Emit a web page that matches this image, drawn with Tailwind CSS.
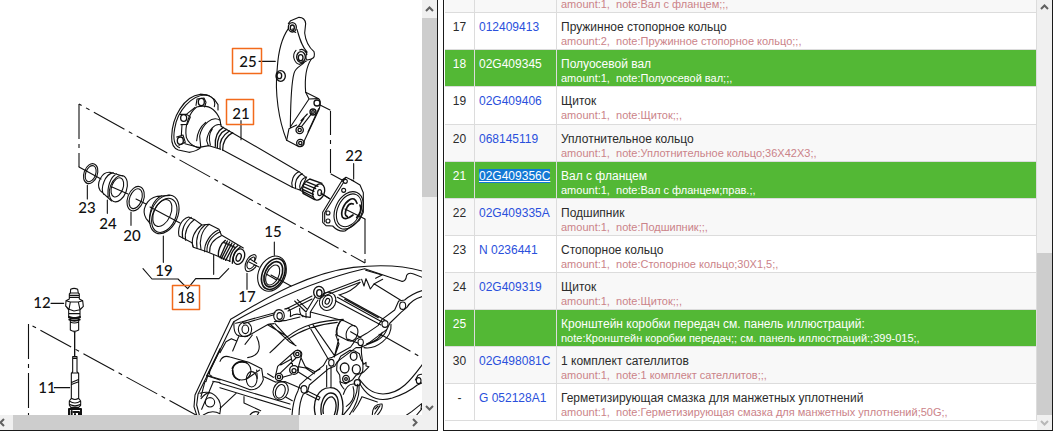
<!DOCTYPE html>
<html lang="ru">
<head>
<meta charset="utf-8">
<title>Каталог запчастей</title>
<script src="https://cdn.jsdelivr.net/npm/@tailwindcss/browser@4"></script>
</head>
<body class="bg-white font-['Liberation_Sans',Arial,sans-serif]">
<main class="flex h-[431px] gap-[5px] pr-px">

<!-- Illustration pane -->
<section class="flex w-[438px] shrink-0 flex-col border-r border-b border-[#1a1a1a]" aria-label="Иллюстрация">
  <div class="flex min-h-0 flex-1">
    <svg class="min-w-0 flex-1" viewBox="0 0 422 415" preserveAspectRatio="xMinYMin slice" fill="none" stroke="#111" stroke-width="1.1" stroke-linecap="round" stroke-linejoin="round">
      <!-- assembly axes -->
      <g stroke-dasharray="35 5 4 5" stroke-linecap="butt">
        <path stroke-dashoffset="32" d="M79 104L365 263"/>
        <path d="M79 104V167"/>
        <path stroke-dashoffset="36" d="M29 324L196 415"/>
        <path d="M28.500 324V415"/>
        <path d="M365 219V263"/>
        <path stroke-dasharray="24 5 4 5" d="M330.500 111V174"/>
        <path d="M380 334L424 359"/>
      </g>
      <path d="M79 167L101 179M112 187L128 194M136 199L146 204M150 207L180 223M249 262L259 267M271 275L291 286M320 105L330 110M331 174L342 180M322 194L330 199M345 209L365 219"/>

      <!-- ring 23, boot 24, ring 20 -->
      <g transform="scale(.33333)" stroke-width="3.3">
        <ellipse cx="272" cy="521" rx="20" ry="31" transform="rotate(20 272 521)"/>
        <ellipse cx="272" cy="521" rx="15" ry="25" transform="rotate(20 272 521)"/>
        <path d="M262 556V597M322 600V640M393 636V676"/>
        <ellipse cx="355" cy="566" rx="25" ry="41" transform="rotate(20 355 566)"/>
        <ellipse cx="352" cy="562" rx="17" ry="30" transform="rotate(20 352 562)"/>
        <path d="M368 528L330 517C305 515 288 550 300 571L335 603M340 518C315 522 300 565 311 583M350 521C332 530 320 560 325 594"/>
        <ellipse cx="407" cy="596" rx="24" ry="38" transform="rotate(20 407 596)"/>
        <ellipse cx="407" cy="596" rx="18" ry="31" transform="rotate(20 407 596)"/>
      </g>

      <!-- boot 19, shaft 18, circlip 17, bearing 15, flange 22 -->
      <g transform="translate(130 180) scale(.33333)" stroke-width="3.3">
        <ellipse cx="103" cy="103" rx="40" ry="61" transform="rotate(24 103 103)"/>
        <ellipse cx="97" cy="99" rx="25" ry="43" transform="rotate(24 97 99)"/>
        <ellipse cx="103" cy="106" rx="34" ry="54" transform="rotate(24 103 106)"/>
        <path d="M120 46L82 49C48 57 34 91 48 115L60 130M94 47Q60 65 58 124"/>
        <path d="M176 111C153 117 142 144 147 168L186 188L190 202L231 215L300 244M176 111L194 119L216 135L237 133L267 148L274 165L340 204"/>
        <path d="M184 112C163 126 153 151 158 174M194 118C173 133 162 157 167 181M215 135C194 151 182 176 189 200M226 134C205 151 197 177 201 204M237 133C214 151 207 183 213 208M265 150C242 160 222 189 224 215M271 155C246 166 229 188 231 215M274 167C249 178 238 197 239 216"/>
        <path stroke-width="4" d="M286 181C272 190 262 214 266 230M292 183L270 233M299 186L274 236M306 189L280 238M313 192L287 241M323 197C309 208 300 225 299 244M331 201C314 212 307 231 307 250M281 187L315 202"/>
        <ellipse cx="327" cy="230" rx="16" ry="24" transform="rotate(20 327 230)" stroke-width="4"/>
        <ellipse cx="326" cy="232" rx="7" ry="12" transform="rotate(20 326 232)" stroke-width="4"/>
        <path d="M373 245C381 232 380 222 370 224C353 228 341 253 347 270C353 281 372 270 379 257M373 245C376 233 373 229 368 232C354 237 347 256 353 264C358 271 368 263 373 255L379 257M360 237L380 250M351 280V328"/>
        <ellipse cx="426" cy="281" rx="40" ry="55" transform="rotate(25 426 281)"/>
        <ellipse cx="430" cy="282" rx="32" ry="49" transform="rotate(25 430 282)" stroke-width="5"/>
        <ellipse cx="430" cy="283" rx="25" ry="40" transform="rotate(25 430 283)" stroke-width="5"/>
        <ellipse cx="428" cy="285" rx="18" ry="32" transform="rotate(25 428 285)"/>
        <path d="M433 186V226M410 283L440 300"/>
        <path d="M100 168V247M251 225V283M39 266L66 297H144L173 326L197 296H267L296 266"/>
        <path d="M637 0L631 10L578 97V127L588 137L608 138Q625 156 645 153L688 121L700 97V38L690 15L665 0M640 8L584 98V126"/>
        <ellipse cx="656" cy="91" rx="40" ry="59" transform="rotate(25 656 91)"/>
        <ellipse cx="657" cy="91" rx="34" ry="52" transform="rotate(25 657 91)"/>
        <path stroke-width="5" d="M681 70Q674 50 659 59C641 70 631 96 637 111Q646 123 669 105M670 72Q659 67 651 82Q640 107 652 110M690 75Q698 93 680 113"/>
        <circle cx="641" cy="31" r="6"/><circle cx="594" cy="99" r="6"/><circle cx="594" cy="123" r="6"/><circle cx="646" cy="4" r="6"/>
      </g>

      <!-- flange shaft 21 -->
      <g transform="translate(160 85) scale(.33333)" stroke-width="3.3">
        <path d="M163 65C170 38 144 26 121 28C72 33 36 97 35 155C34 181 42 190 55 195L87 202Q110 199 122 188"/>
        <path d="M140 30C95 28 52 78 44 131C38 165 44 183 59 188M163 43L174 59V75M121 28L147 32L163 43"/>
        <path d="M108 61L111 42L132 39L138 52L134 66M60 88L80 88L91 96L82 118L63 119M50 156L69 150L76 172L57 181M105 67L79 88M66 119L64 151M75 176L120 188"/>
        <g stroke-width="4"><ellipse cx="124" cy="51" rx="9" ry="11"/><ellipse cx="71" cy="99" rx="9" ry="10"/><ellipse cx="61" cy="167" rx="9" ry="11"/></g>
        <path d="M110 66C142 58 167 71 180 104L183 124L206 137M110 66C87 83 73 125 79 157Q86 178 113 188L147 182L182 193M180 106C157 90 126 119 119 153L122 184M137 112Q112 132 110 167M184 120C164 113 144 137 140 167L145 182M157 132Q143 151 151 180"/>
        <path stroke-width="4" d="M190 127C173 137 164 157 166 184M200 133C180 142 171 162 172 188M208 138C188 151 178 170 180 191M218 143C199 153 188 173 188 195"/>
        <path d="M206 137L417 260M188 195L397 307M243 107V164"/>
        <path d="M417 260C400 266 392 289 397 307L421 316L439 278ZM427 266C410 273 403 292 407 311M440 276C424 280 415 299 421 316L433 323"/>
        <path stroke-width="4" d="M449 282C431 290 424 308 429 325L464 344M449 282L486 295M439 290L474 304M434 297L467 311M430 305L462 319M428 313L460 328M429 320L460 336"/>
        <ellipse cx="476" cy="321" rx="17" ry="25" transform="rotate(20 476 321)" stroke-width="4"/>
        <ellipse cx="479" cy="323" rx="6" ry="9"/>
        <path d="M482 324L507 340"/>
      </g>

      <!-- bracket 25 -->
      <g transform="translate(220 0) scale(.33333)" stroke-width="3.3">
        <path d="M205 71L212 62L237 52Q255 52 257 71L254 99C257 126 267 142 282 155Q287 173 274 177C257 202 254 241 257 277L296 296Q305 304 298 326L254 420Q250 440 237 440L200 421C177 363 163 281 172 202Q177 126 205 86"/>
        <path d="M231 88C239 116 245 139 261 156Q254 177 262 180L274 177M257 183C244 200 227 199 222 220C212 257 212 310 211 381L267 297L257 277M227 97Q218 96 219 86M228 151C213 167 225 191 239 193L259 183M239 150Q251 143 261 163M200 421L207 386L230 375M267 297L294 296M296 326L264 396M252 355L233 382M275 341L245 379M262 342L243 362"/>
        <g stroke-width="4">
          <ellipse cx="217" cy="82" rx="12" ry="14"/><ellipse cx="217" cy="83" rx="6" ry="8"/>
          <ellipse cx="243" cy="171" rx="13" ry="16"/><ellipse cx="242" cy="173" rx="7" ry="9"/>
          <ellipse cx="182" cy="228" rx="14" ry="16"/><ellipse cx="178" cy="227" rx="7" ry="9"/>
          <circle cx="291" cy="309" r="9"/><circle cx="279" cy="336" r="9"/><circle cx="239" cy="390" r="11"/><circle cx="241" cy="429" r="11"/>
          <circle cx="279" cy="336" r="4"/><circle cx="239" cy="390" r="5"/><circle cx="241" cy="429" r="5"/>
        </g>
        <path d="M117 184H166M401 491V537M366 540L378 532L401 543M378 532L368 545"/>
      </g>

      <!-- sensor 12 and cable 11 -->
      <g transform="translate(0 220) scale(.33333)" stroke-width="3.300">
        <path d="M212 208Q222 202 233 208L235 219L238 222V237L248 242L250 259L240 270V293H206V270L197 258L198 242L208 237V222L211 219ZM211 219H235M208 226H238M208 232H238M198 242L211 246H235L248 242M211 246L207 268L222 273L240 269L235 246M197 258L207 268M250 259L240 269M211 294V330Q223 338 236 330V294M206 281H240M211 306Q223 312 236 306"/>
        <path stroke-width="6" d="M207 291Q223 298 240 291M208 299Q223 305 239 299"/>
        <path stroke-width="4" d="M224 337V407"/>
        <path d="M218 410H231V455L236 461V535L242 543V556L236 562H212L208 555V543L214 535V461L218 455ZM218 415H231M214 459H236M216 487L234 479M216 493L234 486M214 535Q225 542 236 535M208 543Q225 555 242 543M208 553Q225 562 242 553"/>
        <path stroke-width="6" d="M207 567H243V585M207 567V585M215 573V585M221 576H237V585M225 582V585"/>
        <path d="M153 250H191M163 503H209"/>
      </g>

      <!-- gearbox housing -->
      <g transform="translate(220 220) scale(.33333)" stroke-width="3.300">
        <path d="M-70 585L-78 560L-75 525L0 365L32 298C120 246 255 160 400 142C470 134 550 136 609 154"/>
        <path d="M-62 585L-70 555L-66 523L3 383L41 305C130 255 270 184 434 146L545 184Q557 186 560 166Q566 156 581 162L609 173"/>
        <path d="M0 398L18 365L34 356L50 363M-40 468L0 386M-25 468Q-36 465 -29 450L0 390M-22 484L0 488M-42 485L-37 468L0 480M-45 484L-57 530M-20 485L-55 568"/>
        <path d="M0 490L210 552M0 503L212 568M0 478L-40 466M72 530V549L122 572M90 585Q100 570 117 577L112 585M0 565L48 520M-50 585Q-25 568 0 581"/>
        <circle cx="-30" cy="547" r="14"/><path d="M-60 520Q-30 510 -12 529Q7 548 0 578M-57 536Q-43 518 -30 518"/>
        <ellipse cx="75" cy="328" rx="20" ry="22"/><ellipse cx="76" cy="328" rx="10" ry="13"/>
        <path d="M42 306Q40 334 50 344Q68 355 90 344L145 313L162 311M47 310L67 305M67 305L165 278M70 311L162 284M198 267L276 228M204 273L276 237M310 221L420 179M312 228L420 187"/>
        <ellipse cx="177" cy="287" rx="16" ry="18"/><ellipse cx="179" cy="288" rx="8" ry="10"/>
        <path d="M194 267Q215 258 211 290M239 265Q238 284 249 290M211 290Q230 275 255 290L271 292V276L294 240M258 280V293M224 243L258 276L285 231M232 239L262 268M163 305L200 301L240 291M271 276L370 302"/>
        <g stroke-width="4"><ellipse cx="297" cy="217" rx="16" ry="18"/><ellipse cx="298" cy="219" rx="8" ry="10"/></g>
        <ellipse cx="323" cy="244" rx="24" ry="28" transform="rotate(25 323 244)"/><ellipse cx="322" cy="244" rx="14" ry="19" transform="rotate(25 322 244)"/><ellipse cx="322" cy="244" rx="6" ry="9" transform="rotate(25 322 244)"/>
        <path d="M357 224L495 300M352 232L485 305M346 242L483 315M374 238L475 293M360 224Q395 215 420 187M425 178L432 198L438 176L444 190L451 207L463 191L488 178M437 151L486 165L467 175M462 191L541 240"/>
        <ellipse cx="548" cy="257" rx="9" ry="11"/><ellipse cx="495" cy="312" rx="9" ry="10"/><ellipse cx="422" cy="367" rx="8" ry="10"/><ellipse cx="334" cy="428" rx="8" ry="10"/><ellipse cx="252" cy="508" rx="9" ry="11"/><ellipse cx="596" cy="482" rx="7" ry="9"/>
        <path d="M609 211Q576 221 554 240L536 243L524 270L486 298L474 317L440 340L422 350L408 358L392 381L337 412L322 416L310 437L260 476L240 494L234 512Q219 541 216 585"/>
        <path d="M609 229Q574 238 560 263L543 277L510 309L500 329L440 374L420 383L408 383L352 425L344 439L326 446L268 495L262 517L250 522Q238 545 237 585"/>
        <path d="M432 383C468 389 517 354 513 313M440 371Q476 364 487 337M477 343L485 346M500 329Q490 360 440 374"/>
        <path d="M426 376C418 404 435 424 427 459M427 455L416 475C435 500 452 521 489 522C543 522 576 475 609 431M420 492C443 533 477 546 517 534Q563 519 592 495L609 487M586 480L594 466Q606 460 609 465M605 551L575 575L560 585M609 562L590 585M605 552L603 567"/>
        <path d="M165 311Q200 350 223 373M150 312L210 367L228 377M144 315L203 350M203 350C248 314 303 302 370 298M203 358C249 326 300 312 352 307M200 350L165 384L150 398M267 318L325 418M279 314L343 406M359 305Q345 331 350 344M347 344L357 372L345 406M356 357L343 411M110 350C127 386 115 409 83 413M56 350L38 393M97 345L75 373"/>
        <ellipse cx="396" cy="340" rx="17" ry="24" transform="rotate(20 396 340)"/>
        <path d="M366 299L405 319M352 346L385 362M392 335L423 353M385 358L415 370M366 299Q346 319 352 347"/>
        <ellipse cx="65" cy="452" rx="28" ry="28"/><ellipse cx="95" cy="478" rx="16" ry="23"/>
        <path stroke-width="5" d="M80 427Q47 420 37 445M38 450Q38 475 58 480"/>
        <path d="M0 424Q8 404 30 411L86 427M86 427L125 446L130 479Q119 511 90 509L43 491L0 478M80 477L119 450M110 450L112 475M132 470L166 486M143 461L160 472"/>
        <g stroke-width="4"><circle cx="232" cy="402" r="11"/><circle cx="232" cy="402" r="5"/><circle cx="222" cy="450" r="13"/><circle cx="222" cy="452" r="6"/><circle cx="177" cy="471" r="11"/><circle cx="177" cy="471" r="5"/></g>
        <path d="M222 396L173 439L166 470M228 414L180 460M233 390Q250 393 244 410L232 452M213 409L218 437M182 435L213 418M188 472L214 464M242 411L256 440L285 455L300 447M235 456L273 480M234 440L257 444L283 461"/>
        <ellipse cx="182" cy="512" rx="22" ry="28" transform="rotate(20 182 512)"/><ellipse cx="181" cy="514" rx="14" ry="21" transform="rotate(20 181 514)"/>
        <path d="M167 486L196 485L242 505M198 532L217 542M262 513L300 532L296 540L260 522"/>
        <path stroke-width="4" d="M286 585C276 544 294 504 329 503C365 501 373 544 367 585M304 583C298 549 314 518 333 519C357 520 359 554 350 585M310 580C305 553 322 529 337 531C352 541 350 566 343 585"/>
        <path d="M320 437V500M333 440V500M362 409L390 391L404 393L418 401L422 416L431 433L438 427V438L447 440L430 457L408 466L398 479L377 491L361 486L359 465L350 451L351 431Z"/>
        <g stroke-width="4"><ellipse cx="401" cy="409" rx="10" ry="12"/><ellipse cx="374" cy="444" rx="13" ry="15"/><ellipse cx="409" cy="448" rx="12" ry="14"/><ellipse cx="378" cy="477" rx="10" ry="11"/><circle cx="378" cy="477" r="4"/><ellipse cx="412" cy="488" rx="9" ry="9"/></g>
        <path d="M370 585Q412 542 413 493M370 523Q381 490 402 492M379 559Q410 538 399 500M372 507Q360 492 360 485M417 498Q420 540 388 585M426 530Q414 557 399 576M426 530L472 546M457 585Q458 550 486 552M486 552Q490 565 472 585M464 582L480 557M474 558L465 567"/>
      </g>

      <g stroke="#f26a1b" stroke-width="1.500" stroke-linecap="butt">
        <rect x="232.500" y="48.500" width="29" height="25"/>
        <rect x="226.500" y="99.500" width="27" height="25"/>
        <rect x="172.500" y="285.500" width="27" height="24"/>
      </g>
      <g class="font-[Lato,sans-serif] text-[15px] font-medium" fill="#111" stroke="none" text-anchor="middle">
        <text x="248" y="67">25</text><text x="241" y="119">21</text><text x="354" y="161">22</text>
        <text x="87" y="213">23</text><text x="108" y="229">24</text><text x="132" y="241">20</text>
        <text x="164" y="276">19</text><text x="186" y="303">18</text><text x="273" y="237">15</text>
        <text x="247" y="302">17</text><text x="42" y="308">12</text><text x="47" y="393">11</text>
      </g>
    </svg>
    <div class="flex w-[15px] flex-col justify-between bg-[#f0f0f0]">
      <button class="flex h-[18px] items-center justify-center" aria-label="Вверх"><svg class="size-[9px]" viewBox="0 0 9 9" fill="none" stroke="#606060" stroke-width="2"><path d="M1 6L4.500 2.500L8 6"/></svg></button>
      <div class="h-[179px] bg-[#cdcdcd]"></div>
      <div class="flex-1"></div>
      <button class="flex h-[15px] items-center justify-center" aria-label="Вниз"><svg class="size-[9px]" viewBox="0 0 9 9" fill="none" stroke="#606060" stroke-width="2"><path d="M1 3L4.500 6.500L8 3"/></svg></button>
    </div>
  </div>
  <div class="flex h-[15px] bg-[#f0f0f0]">
    <button class="flex w-[13px] items-center" aria-label="Влево"><svg class="h-[9px] w-[6px]" viewBox="2 0 6 9" fill="none" stroke="#606060" stroke-width="2"><path d="M6 1L2.500 4.500L6 8"/></svg></button>
    <div class="w-[286px] bg-[#cdcdcd]"></div>
    <div class="flex-1"></div>
    <button class="mr-[15px] flex w-[15px] items-center justify-center" aria-label="Вправо"><svg class="size-[9px]" viewBox="0 0 9 9" fill="none" stroke="#606060" stroke-width="2"><path d="M3 1L6.500 4.500L3 8"/></svg></button>
  </div>
</section>

<!-- Parts list -->
<section class="flex min-w-0 flex-1 border-x border-b border-[#1a1a1a]" aria-label="Список деталей">
  <div class="min-w-0 flex-1 pl-px">
  <table class="w-full table-fixed border-separate border-spacing-0 text-left text-[12px] leading-4 text-[#2b2b2b] [&_a]:text-[#2a50dc] [&_small]:block [&_small]:text-[11px] [&_small]:leading-3 [&_small]:text-[#cb8389] [&_td]:border-r [&_td]:border-b [&_td]:border-[#dcdcdc] [&_td]:px-1 [&_td]:pt-[6px] [&_td]:pb-[2px] [&_td]:align-top [&_td:first-child]:px-0 [&_td:first-child]:text-center">
    <colgroup><col class="w-[30px]"><col class="w-[82px]"><col></colgroup>
    <tbody>
      <tr class="bg-[#f8f8f8]"><td class="h-[13px] !p-0"></td><td class="!p-0"></td><td class="!py-0"><small class="!leading-[9px]">amount:1,&nbsp; note:Вал с фланцем;;,</small></td></tr>
      <tr><td>17</td><td><a href="#012409413">012409413</a></td><td>Пружинное стопорное кольцо<small>amount:2,&nbsp; note:Пружинное стопорное кольцо;;,</small></td></tr>
      <tr class="bg-[#53b835] text-white [&_a]:!text-white [&_small]:!text-white"><td>18</td><td><a href="#02G409345">02G409345</a></td><td>Полуосевой вал<small>amount:1,&nbsp; note:Полуосевой вал;;,</small></td></tr>
      <tr class="h-[38px]"><td>19</td><td><a href="#02G409406">02G409406</a></td><td>Щиток<small>amount:1,&nbsp; note:Щиток;;,</small></td></tr>
      <tr class="bg-[#f8f8f8]"><td>20</td><td><a href="#068145119">068145119</a></td><td>Уплотнительное кольцо<small>amount:1,&nbsp; note:Уплотнительное кольцо;36X42X3;,</small></td></tr>
      <tr class="bg-[#53b835] text-white [&_a]:!text-white [&_small]:!text-white"><td>21</td><td><a class="bg-[#1278d4] underline" href="#02G409356C">02G409356C</a></td><td>Вал с фланцем<small>amount:1,&nbsp; note:Вал с фланцем;прав.;,</small></td></tr>
      <tr class="bg-[#f8f8f8]"><td>22</td><td><a href="#02G409335A">02G409335A</a></td><td>Подшипник<small>amount:1,&nbsp; note:Подшипник;;,</small></td></tr>
      <tr><td>23</td><td><a href="#N0236441">N 0236441</a></td><td>Стопорное кольцо<small>amount:1,&nbsp; note:Стопорное кольцо;30X1,5;,</small></td></tr>
      <tr class="bg-[#f8f8f8]"><td>24</td><td><a href="#02G409319">02G409319</a></td><td>Щиток<small>amount:1,&nbsp; note:Щиток;;,</small></td></tr>
      <tr class="bg-[#53b835] text-white [&_small]:!text-white"><td>25</td><td></td><td>Кронштейн коробки передач см. панель иллюстраций:<small>note:Кронштейн коробки передач;; см. панель иллюстраций:;399-015;,</small></td></tr>
      <tr class="bg-[#f8f8f8]"><td>30</td><td><a href="#02G498081C">02G498081C</a></td><td>1 комплект сателлитов<small>amount:1,&nbsp; note:1 комплект сателлитов;;,</small></td></tr>
      <tr><td>-</td><td><a href="#G052128A1">G 052128A1</a></td><td>Герметизирующая смазка для манжетных уплотнений<small>amount:1,&nbsp; note:Герметизирующая смазка для манжетных уплотнений;50G;,</small></td></tr>
    </tbody>
  </table>
  </div>
  <div class="flex w-[15px] flex-col bg-[#f0f0f0]">
    <button class="flex h-[15px] items-center justify-center" aria-label="Вверх"><svg class="size-[9px]" viewBox="0 0 9 9" fill="none" stroke="#606060" stroke-width="2"><path d="M1 6L4.500 2.500L8 6"/></svg></button>
    <div class="flex-1"></div>
    <div class="h-[162px] bg-[#cdcdcd]"></div>
    <button class="flex h-[15px] items-center justify-center" aria-label="Вниз"><svg class="size-[9px]" viewBox="0 0 9 9" fill="none" stroke="#b8b8b8" stroke-width="2"><path d="M1 3L4.500 6.500L8 3"/></svg></button>
  </div>
</section>
</main>
</body>
</html>
